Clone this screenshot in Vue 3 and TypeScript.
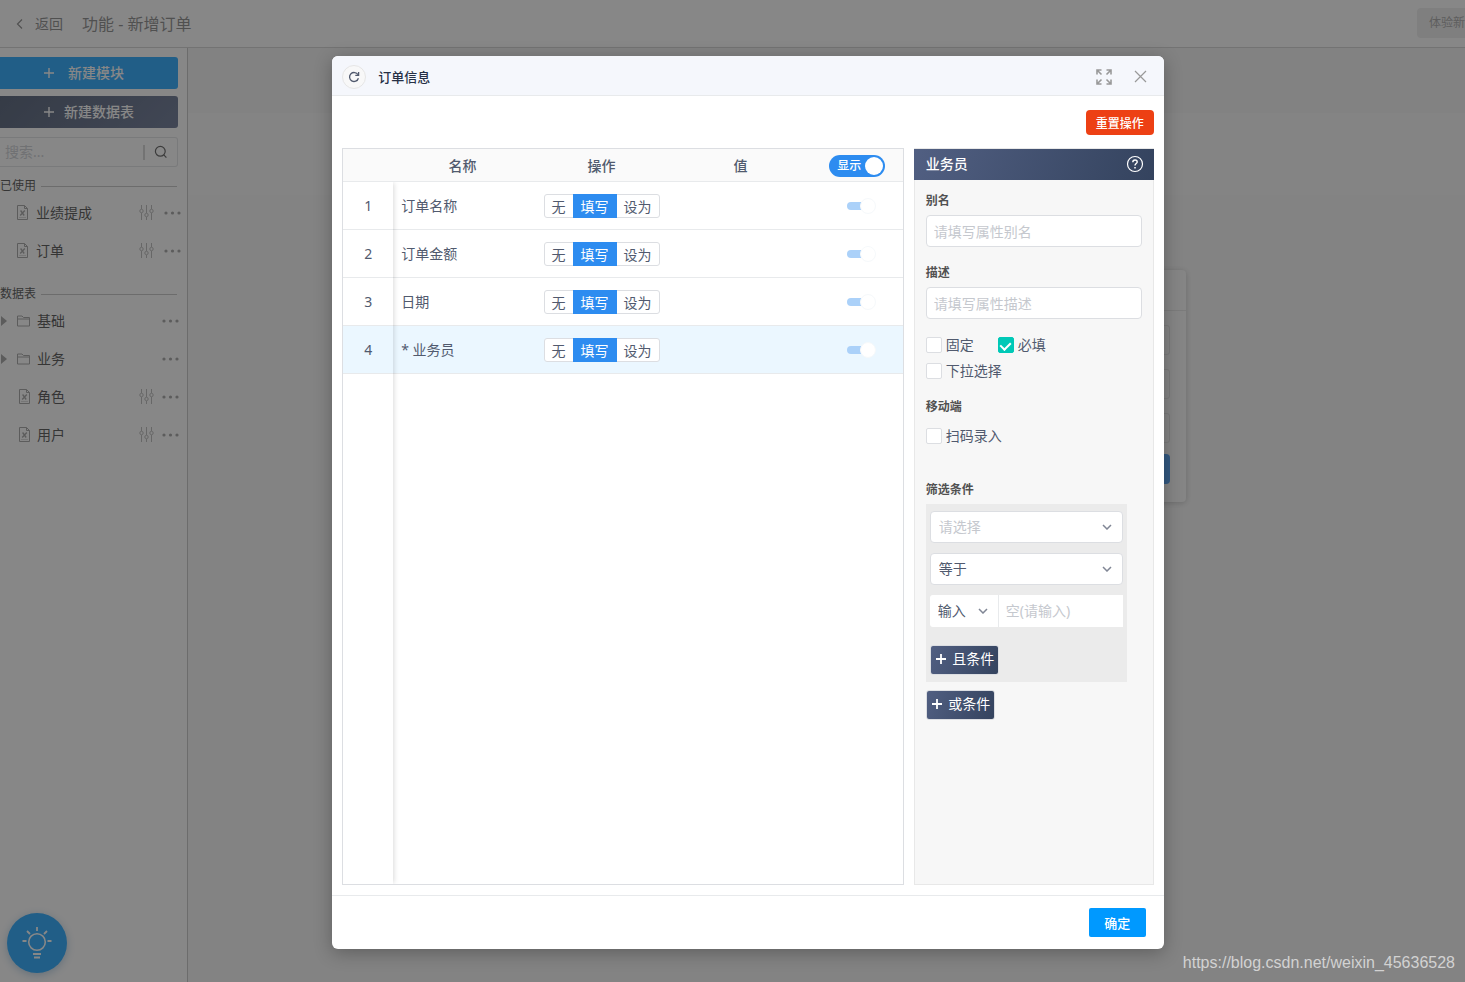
<script setup lang="ts">
import { reactive, ref } from 'vue'

interface TreeItem {
  name: string
  kind: 'doc' | 'folder'
}

interface FieldRow {
  name: string
  mode: string
  visible: boolean
}

const usedItems: TreeItem[] = [
  { name: '业绩提成', kind: 'doc' },
  { name: '订单', kind: 'doc' },
]

const tableItems: TreeItem[] = [
  { name: '基础', kind: 'folder' },
  { name: '业务', kind: 'folder' },
  { name: '角色', kind: 'doc' },
  { name: '用户', kind: 'doc' },
]

const modes = ['无', '填写', '设为']

const rows = reactive<FieldRow[]>([
  { name: '订单名称', mode: '填写', visible: true },
  { name: '订单金额', mode: '填写', visible: true },
  { name: '日期', mode: '填写', visible: true },
  { name: '* 业务员', mode: '填写', visible: true },
])

const selected = ref(3)
const showAll = ref(true)
const search = ref('')
const alias = ref('')
const description = ref('')
const pinned = ref(false)
const required = ref(true)
const dropdown = ref(false)
const scan = ref(false)
const field = ref('')
const operator = ref('eq')
const source = ref('input')
const value = ref('')
</script>

<template>
  <div class="page">
    <header class="topbar">
      <button class="back" type="button">
        <svg width="8" height="12" viewBox="0 0 8 12"><path d="M7 1.500 2.500 6 7 10.500" fill="none" stroke="currentColor" stroke-width="1.2" /></svg>
        <span>返回</span>
      </button>
      <h1>功能 - 新增订单</h1>
      <button class="trial" type="button">体验新</button>
    </header>

    <div class="workspace">
      <aside class="sidebar">
        <button class="create module" type="button">
          <svg width="10" height="10" viewBox="0 0 10 10"><path d="M5 0v10M0 5h10" stroke="currentColor" stroke-width="1.4" /></svg>
          <span>新建模块</span>
        </button>
        <button class="create sheet" type="button">
          <svg width="10" height="10" viewBox="0 0 10 10"><path d="M5 0v10M0 5h10" stroke="currentColor" stroke-width="1.4" /></svg>
          <span>新建数据表</span>
        </button>
        <div class="search">
          <input v-model="search" type="text" placeholder="搜索..." aria-label="搜索" />
          <button type="button" aria-label="搜索">
            <svg width="14" height="14" viewBox="0 0 14 14" fill="none" stroke="currentColor" stroke-width="1.2"><circle cx="6.3" cy="6.3" r="4.9" /><path d="m9.8 9.8 2.6 2.8" /></svg>
          </button>
        </div>

        <h2 class="group"><span>已使用</span></h2>
        <ul class="tree used">
          <li v-for="item in usedItems" :key="item.name">
            <svg class="doc-icon" width="12" height="16" viewBox="0 0 12 16" fill="none" stroke="currentColor"><path d="M.5 .5h7l3 3v11H.5z" /><path d="M7.500 .5v3h3" /><path d="M3.600 5.500l3.600 5M7.800 5.500l-4.600 5" stroke-width="1.300" /><path d="M2 12.500h7" opacity=".4" /></svg>
            <span class="name">{{ item.name }}</span>
            <button type="button" aria-label="设置">
              <svg width="15" height="16" viewBox="0 0 15 16" fill="none" stroke="currentColor" opacity=".75"><path d="M2.500 0v4M2.500 8v7M7.500 0v8M7.500 12v3M12.500 0v4M12.500 8v7" /><circle cx="2.500" cy="6" r="1.700" /><circle cx="7.500" cy="10" r="1.700" /><circle cx="12.500" cy="6" r="1.700" /></svg>
            </button>
            <button type="button" aria-label="更多">
              <svg width="17" height="4" viewBox="0 0 17 4" fill="currentColor"><circle cx="2" cy="2" r="1.600" /><circle cx="8.500" cy="2" r="1.600" /><circle cx="15" cy="2" r="1.600" /></svg>
            </button>
          </li>
        </ul>

        <h2 class="group"><span>数据表</span></h2>
        <ul class="tree tables">
          <li v-for="item in tableItems" :key="item.name">
            <svg v-if="item.kind === 'folder'" class="caret" width="6" height="10" viewBox="0 0 6 10" fill="currentColor"><path d="M0 0l6 5-6 5z" /></svg>
            <svg v-if="item.kind === 'folder'" class="folder-icon" width="14" height="12" viewBox="0 0 14 12" fill="none" stroke="currentColor"><path d="M.5 11V1h4.500l1.500 1.500h6v8.500zM.5 4h12" /></svg>
            <svg v-else class="doc-icon" width="12" height="16" viewBox="0 0 12 16" fill="none" stroke="currentColor"><path d="M.5 .5h7l3 3v11H.5z" /><path d="M7.500 .5v3h3" /><path d="M3.600 5.500l3.600 5M7.800 5.500l-4.600 5" stroke-width="1.300" /><path d="M2 12.500h7" opacity=".4" /></svg>
            <span class="name">{{ item.name }}</span>
            <button v-if="item.kind === 'doc'" type="button" aria-label="设置">
              <svg width="15" height="16" viewBox="0 0 15 16" fill="none" stroke="currentColor" opacity=".75"><path d="M2.500 0v4M2.500 8v7M7.500 0v8M7.500 12v3M12.500 0v4M12.500 8v7" /><circle cx="2.500" cy="6" r="1.700" /><circle cx="7.500" cy="10" r="1.700" /><circle cx="12.500" cy="6" r="1.700" /></svg>
            </button>
            <button type="button" aria-label="更多">
              <svg width="17" height="4" viewBox="0 0 17 4" fill="currentColor"><circle cx="2" cy="2" r="1.600" /><circle cx="8.500" cy="2" r="1.600" /><circle cx="15" cy="2" r="1.600" /></svg>
            </button>
          </li>
        </ul>
      </aside>

      <main class="canvas">
        <section class="form-card">
          <div class="form-title"></div>
          <div class="form-body">
            <div v-for="n in 3" :key="n" class="form-slot"></div>
            <div class="form-submit"></div>
          </div>
        </section>
      </main>
    </div>

    <button class="tips" type="button" aria-label="提示">
      <svg width="30" height="34" viewBox="0 0 30 34" fill="none" stroke="currentColor"><circle cx="15" cy="16" r="8.300" stroke-width="1.600" /><path d="M15 1v4M5 5l3 3M25 5l-3 3M.5 15h4M25.500 15h4" stroke-width="1.800" /><path d="M11 28h8M12 31.500h6" stroke-width="1.800" /></svg>
    </button>

    <div class="mask">
      <section class="dialog" role="dialog" aria-modal="true" aria-labelledby="dialog-title">
        <header class="dialog-head">
          <button class="refresh" type="button" aria-label="刷新">
            <svg width="12" height="12" viewBox="0 0 12 12" fill="none" stroke="currentColor" stroke-width="1.300"><path d="M10 3.800A4.500 4.500 0 1 0 10.400 7.200" /><path d="M10.600 1v3.300H7.300" /></svg>
          </button>
          <h2 id="dialog-title">订单信息</h2>
          <button class="head-icon" type="button" aria-label="全屏">
            <svg width="16" height="16" viewBox="0 0 16 16" fill="none" stroke="currentColor" stroke-width="1.600"><path d="M1 5.500V1h4.500M1 1l4.500 4.500M10.500 1H15v4.500M15 1l-4.500 4.500M1 10.500V15h4.500M1 15l4.500-4.500M15 10.500V15h-4.500M15 15l-4.500-4.500" /></svg>
          </button>
          <button class="head-icon" type="button" aria-label="关闭">
            <svg width="13" height="13" viewBox="0 0 13 13" fill="none" stroke="currentColor" stroke-width="1.200"><path d="M1 1l11 11M12 1 1 12" /></svg>
          </button>
        </header>

        <div class="dialog-body">
          <button class="reset" type="button">重置操作</button>

          <div class="columns">
            <div class="grid">
              <table>
                <colgroup>
                  <col class="c-index" /><col /><col /><col /><col class="c-show" />
                </colgroup>
                <thead>
                  <tr>
                    <th></th>
                    <th>名称</th>
                    <th>操作</th>
                    <th>值</th>
                    <th>
                      <label class="big-switch"><input v-model="showAll" type="checkbox" role="switch" /><span>显示</span><i></i></label>
                    </th>
                  </tr>
                </thead>
                <tbody>
                  <tr v-for="(row, i) in rows" :key="row.name" :class="{ active: selected === i }" @click="selected = i">
                    <td>{{ i + 1 }}</td>
                    <td class="field">{{ row.name }}</td>
                    <td>
                      <div class="modes" role="radiogroup" aria-label="操作">
                        <label v-for="mode in modes" :key="mode" :class="{ on: row.mode === mode }"><input v-model="row.mode" type="radio" :name="'mode' + i" :value="mode" />{{ mode }}</label>
                      </div>
                    </td>
                    <td></td>
                    <td class="show"><input v-model="row.visible" class="mini-switch" type="checkbox" role="switch" aria-label="显示" /></td>
                  </tr>
                </tbody>
              </table>
              <div class="fixed-edge"></div>
            </div>

            <aside class="panel">
              <header>
                <h3>业务员</h3>
                <button type="button" aria-label="帮助">
                  <svg width="18" height="18" viewBox="0 0 18 18" fill="none" stroke="currentColor" stroke-width="1.200"><circle cx="9" cy="9" r="7.500" /><path d="M6.800 7.200c0-1.400 1-2.200 2.200-2.200s2.200.8 2.200 2c0 1.500-2.200 1.700-2.200 3.500" stroke-width="1.400" /><path d="M9 12v1.500" stroke-width="1.500" /></svg>
                </button>
              </header>
              <div class="panel-body">
                <label class="caption" for="alias">别名</label>
                <input id="alias" v-model="alias" class="text" type="text" placeholder="请填写属性别名" />
                <label class="caption second" for="description">描述</label>
                <input id="description" v-model="description" class="text" type="text" placeholder="请填写属性描述" />
                <div class="checks">
                  <label><input v-model="pinned" type="checkbox" />固定</label>
                  <label><input v-model="required" type="checkbox" />必填</label>
                  <label><input v-model="dropdown" type="checkbox" />下拉选择</label>
                </div>
                <h4 class="caption">移动端</h4>
                <div class="checks mobile">
                  <label><input v-model="scan" type="checkbox" />扫码录入</label>
                </div>
                <h4 class="caption">筛选条件</h4>
                <div class="filter">
                  <div class="select">
                    <select v-model="field" class="empty" aria-label="字段"><option value="">请选择</option></select>
                    <svg width="10" height="6" viewBox="0 0 10 6" fill="none" stroke="currentColor" stroke-width="1.500"><path d="M1 1l4 4 4-4" /></svg>
                  </div>
                  <div class="select">
                    <select v-model="operator" aria-label="比较方式"><option value="eq">等于</option></select>
                    <svg width="10" height="6" viewBox="0 0 10 6" fill="none" stroke="currentColor" stroke-width="1.500"><path d="M1 1l4 4 4-4" /></svg>
                  </div>
                  <div class="pair">
                    <div class="select">
                      <select v-model="source" aria-label="值来源"><option value="input">输入</option></select>
                      <svg width="10" height="6" viewBox="0 0 10 6" fill="none" stroke="currentColor" stroke-width="1.500"><path d="M1 1l4 4 4-4" /></svg>
                    </div>
                    <input v-model="value" type="text" placeholder="空(请输入)" aria-label="值" />
                  </div>
                  <button class="add" type="button">
                    <svg width="10" height="10" viewBox="0 0 10 10"><path d="M5 0v10M0 5h10" stroke="currentColor" stroke-width="1.800" /></svg>且条件
                  </button>
                </div>
                <button class="add" type="button">
                  <svg width="10" height="10" viewBox="0 0 10 10"><path d="M5 0v10M0 5h10" stroke="currentColor" stroke-width="1.800" /></svg>或条件
                </button>
              </div>
            </aside>
          </div>
        </div>

        <footer class="dialog-foot">
          <button type="button">确定</button>
        </footer>
      </section>
    </div>

    <div class="watermark">https://blog.csdn.net/weixin_45636528</div>
  </div>
</template>

<style>
body {
  margin: 0;
}
</style>

<style scoped>
* {
  box-sizing: border-box;
}

.page {
  position: relative;
  display: flex;
  flex-direction: column;
  height: 100vh;
  overflow: hidden;
  background: #fff;
  color: #515a6e;
  font: 14px/20px "Noto Sans", "Noto Sans CJK SC", sans-serif;
}

button,
input,
select {
  margin: 0;
  padding: 0;
  border: 0;
  background: none;
  color: inherit;
  font: inherit;
  outline: none;
}

button {
  display: flex;
  align-items: center;
  justify-content: center;
  white-space: nowrap;
  cursor: pointer;
}

svg {
  display: block;
  flex: none;
}

h1,
h2,
h3,
h4,
ul {
  margin: 0;
  padding: 0;
  font-weight: 400;
  list-style: none;
}

input::placeholder {
  color: #c5c8ce;
  opacity: 1;
}

.topbar {
  display: flex;
  flex: none;
  align-items: center;
  height: 48px;
  padding-left: 15px;
  border-bottom: 1px solid #ccc;
  color: #777;
}

.back {
  gap: 12px;
}

.topbar h1 {
  margin-left: 19px;
  font-size: 16px;
}

.trial {
  height: 30px;
  margin: 0 0 2px auto;
  padding-left: 12px;
  border-radius: 4px 0 0 4px;
  background: #ebebeb;
  font-size: 12px;
  color: #999;
}

.workspace {
  display: flex;
  flex: 1;
  min-height: 0;
}

.sidebar {
  flex: none;
  width: 188px;
  padding: 9px 9px 0 0;
  border-right: 1px solid #bbb;
}

.create {
  width: 100%;
  height: 32px;
  border-radius: 0 3px 3px 0;
  color: #fff;
  font-weight: 500;
}

.create.module {
  gap: 14px;
  padding-right: 10px;
  background: #09f;
}

.create.sheet {
  gap: 10px;
  margin-top: 7px;
  background: linear-gradient(135deg, #34435e, #515f82);
}

.search {
  display: flex;
  align-items: center;
  height: 30px;
  margin-top: 9px;
  border: 1px solid #dcdee2;
  border-left: 0;
  border-radius: 0 3px 3px 0;
}

.search input {
  flex: 1;
  min-width: 0;
  padding-left: 5px;
}

.search button {
  width: 34px;
  height: 15px;
  border-left: 2px solid #ccc;
  color: #444;
}

.group {
  display: flex;
  align-items: center;
  gap: 5px;
  height: 20px;
  margin-top: 9px;
  font-size: 12px;
  color: #333;
}

.group::after {
  content: "";
  flex: 1;
  height: 1px;
  margin-right: 1px;
  background: #bbb;
}

.tree {
  margin-top: -2px;
}

.tree li {
  display: flex;
  align-items: center;
  height: 38px;
  color: #949494;
}

.tree .name {
  flex: 1;
  margin-left: 6px;
  color: #333;
}

.tree.used {
  margin-right: -3px;
  margin-bottom: 14px;
}

.used .doc-icon {
  margin-left: 17px;
}

.used .name {
  margin-left: 7px;
}

.used button + button {
  margin-left: 10px;
}

.tree.tables {
  margin-right: -1px;
}

.tables .doc-icon {
  margin-left: 19px;
}

.tables button + button {
  margin-left: 8px;
}

.caret {
  margin-left: 1px;
}

.folder-icon {
  margin-left: 10px;
}

.canvas {
  flex: 1;
  background: linear-gradient(#f3f3f3 65px, #f8f8f8 65px, #f8f8f8 147px, #f6f6f6 147px);
}

.form-card {
  width: 688px;
  margin: 222px 279px 0 auto;
  border-radius: 4px;
  background: #f9f9f9;
  box-shadow: 0 1px 6px rgba(0, 0, 0, 0.25);
}

.form-title {
  height: 41px;
  border-bottom: 1px solid #e0e0e0;
}

.form-body {
  display: grid;
  gap: 14px;
  padding: 14px 16px 18px;
}

.form-slot {
  height: 30px;
  border: 1px solid #e0e0e0;
  border-radius: 3px;
}

.form-submit {
  height: 30px;
  margin-top: -3px;
  border-radius: 4px;
  background: #2d8cf0;
}

.tips {
  position: absolute;
  left: 7px;
  bottom: 9px;
  width: 60px;
  height: 60px;
  border-radius: 50%;
  background: #09f;
  box-shadow: 0 2px 8px rgba(0, 90, 160, 0.35);
  color: #fff;
}

.mask {
  position: absolute;
  inset: 0;
  display: flex;
  justify-content: center;
  padding: 56px 0 33px 31px;
  background: rgba(55, 55, 55, 0.6);
}

.dialog {
  display: flex;
  flex-direction: column;
  width: 58%;
  border-radius: 6px;
  background: #fff;
  box-shadow: 0 4px 18px rgba(0, 0, 0, 0.28);
  overflow: hidden;
}

.dialog-head {
  display: flex;
  flex: none;
  align-items: center;
  height: 40px;
  padding: 2px 17px 0 10px;
  border-bottom: 1px solid #e8eaec;
  background: #f5f7fc;
}

.refresh {
  width: 24px;
  height: 24px;
  border: 1px solid #e6e6e6;
  border-radius: 50%;
  background: #f8f8f8;
}

.dialog-head h2 {
  flex: 1;
  margin-left: 12px;
  font-size: 13px;
  font-weight: 500;
  color: #263045;
}

.head-icon {
  color: #999;
}

.head-icon + .head-icon {
  margin-left: 22px;
}

.dialog-body {
  display: flex;
  flex: 1;
  flex-direction: column;
  min-height: 0;
  padding: 14px 10px 10px;
}

.reset {
  align-self: flex-end;
  flex: none;
  width: 68px;
  height: 25px;
  padding-top: 2px;
  border-radius: 4px;
  background: #ed4014;
  color: #fff;
  font-size: 12px;
  font-weight: 500;
}

.columns {
  display: flex;
  flex: 1;
  gap: 10px;
  min-height: 0;
  margin-top: 13px;
}

.grid {
  position: relative;
  flex: 1;
  min-width: 0;
  border: 1px solid #dcdee2;
}

table {
  width: 100%;
  border-collapse: separate;
  border-spacing: 0;
  table-layout: fixed;
}

.c-index {
  width: 50px;
}

.c-show {
  width: 93px;
}

th,
td {
  padding: 0;
  border-bottom: 1px solid #e8eaec;
  text-align: center;
}

th {
  height: 33px;
  padding-top: 2px;
  background: #fafafa;
  font-weight: 500;
}

th:last-child {
  padding-left: 2px;
}

td {
  height: 48px;
}

td.field {
  padding-left: 8px;
  text-align: left;
}

td.show {
  padding-left: 5px;
}

tr.active td {
  background: #ebf7ff;
}

.fixed-edge {
  position: absolute;
  top: 33px;
  bottom: 0;
  left: 0;
  width: 50px;
  box-shadow: 2px 0 5px -1px rgba(0, 0, 0, 0.15);
  clip-path: inset(0 -8px 0 0);
  pointer-events: none;
}

.modes {
  display: inline-flex;
  height: 24px;
  border: 1px solid #dcdee2;
  border-radius: 3px;
  background: #fff;
  vertical-align: top;
}

.modes label {
  padding: 0 7px;
  line-height: 23px;
  cursor: pointer;
}

.modes label.on {
  margin: -1px 0;
  padding: 0 8px;
  background: #2d8cf0;
  color: #fff;
  line-height: 25px;
}

.modes input,
.big-switch input {
  position: absolute;
  width: 1px;
  height: 1px;
  opacity: 0;
}

.big-switch {
  display: inline-flex;
  align-items: center;
  justify-content: space-between;
  width: 56px;
  height: 22px;
  padding: 0 2px 0 8px;
  border-radius: 11px;
  background: #2d8cf0;
  color: #fff;
  font-size: 12px;
  font-weight: 500;
  vertical-align: top;
  cursor: pointer;
}

.big-switch i {
  width: 18px;
  height: 18px;
  border-radius: 50%;
  background: #fff;
}

.mini-switch {
  display: flex;
  align-items: center;
  justify-content: flex-end;
  width: 24px;
  height: 8px;
  margin: 0 auto;
  border-radius: 4px;
  background: #abd1f9;
  appearance: none;
}

.mini-switch::after {
  content: "";
  flex: none;
  width: 14px;
  height: 14px;
  margin-right: -5px;
  border: 1px solid #f6f9fb;
  border-radius: 50%;
  background: #fff;
}

.panel {
  flex: none;
  width: 240px;
  border: 1px solid #e8e8e8;
  background: #f7f7f7;
}

.panel header {
  display: flex;
  align-items: center;
  justify-content: space-between;
  height: 31px;
  margin: 0 -1px;
  padding: 0 10px 2px 12px;
  background: linear-gradient(110deg, #515f82, #34435e);
  color: #fff;
}

.panel h3 {
  font-size: 14px;
  font-weight: 500;
}

.panel-body {
  padding: 11px;
}

.caption {
  display: block;
  font-size: 12px;
  font-weight: 700;
  color: #515151;
}

.caption.second {
  margin-top: 16px;
}

.text {
  width: 100%;
  height: 32px;
  margin-top: 4px;
  padding: 0 7px;
  border: 1px solid #dcdee2;
  border-radius: 4px;
  background: #fff;
}

.checks {
  display: flex;
  flex-wrap: wrap;
  gap: 6px 24px;
  margin: 16px 0;
}

.checks.mobile {
  margin: 9px 0 34px;
}

.checks label {
  display: flex;
  align-items: center;
  gap: 4px;
  cursor: pointer;
}

.checks input {
  display: flex;
  justify-content: center;
  width: 16px;
  height: 16px;
  border: 1px solid #dcdee2;
  border-radius: 2px;
  background: #fff;
  appearance: none;
}

.checks input:checked {
  border-color: #00c9b7;
  background: #00c9b7;
}

.checks input:checked::after {
  content: "";
  width: 5px;
  height: 8px;
  margin-top: 2px;
  border: solid #fff;
  border-width: 0 2px 2px 0;
  transform: rotate(45deg);
}

.filter {
  display: flex;
  flex-direction: column;
  gap: 10px;
  width: 201px;
  margin: 4px 0 8px;
  padding: 7px 4px;
  background: #ebebeb;
}

.select {
  position: relative;
}

.select select {
  display: block;
  width: 100%;
  height: 32px;
  padding: 0 8px;
  border: 1px solid #dcdee2;
  border-radius: 4px;
  background: #fff;
  appearance: none;
}

.select select.empty {
  color: #c5c8ce;
}

.select svg {
  position: absolute;
  top: 13px;
  right: 11px;
  color: #808695;
  pointer-events: none;
}

.pair {
  display: flex;
}

.pair .select {
  flex: none;
  width: 68px;
}

.pair .select select {
  border: 0;
  border-radius: 3px 0 0 3px;
}

.pair .select svg {
  right: 10px;
}

.pair input {
  flex: 1;
  min-width: 0;
  padding: 0 7px;
  border-left: 1px solid #e8eaec;
  background: #fff;
}

.add {
  gap: 6px;
  width: 69px;
  height: 30px;
  padding: 0 0 2px 2px;
  border: 1px solid #dcdee2;
  border-radius: 3px;
  background: linear-gradient(110deg, #515f82, #34435e) border-box;
  color: #fff;
}

.filter .add {
  margin-top: 8px;
}

.dialog-foot {
  display: flex;
  flex: none;
  justify-content: flex-end;
  padding: 12px 18px;
  border-top: 1px solid #e8eaec;
}

.dialog-foot button {
  width: 57px;
  height: 29px;
  border-radius: 2px;
  background: #09f;
  color: #fff;
  font-size: 13px;
  font-weight: 500;
}

.watermark {
  position: absolute;
  right: 10px;
  bottom: 9px;
  color: #d2d2d2;
  font: 16px/20px "Liberation Sans", Arial, sans-serif;
}
</style>
